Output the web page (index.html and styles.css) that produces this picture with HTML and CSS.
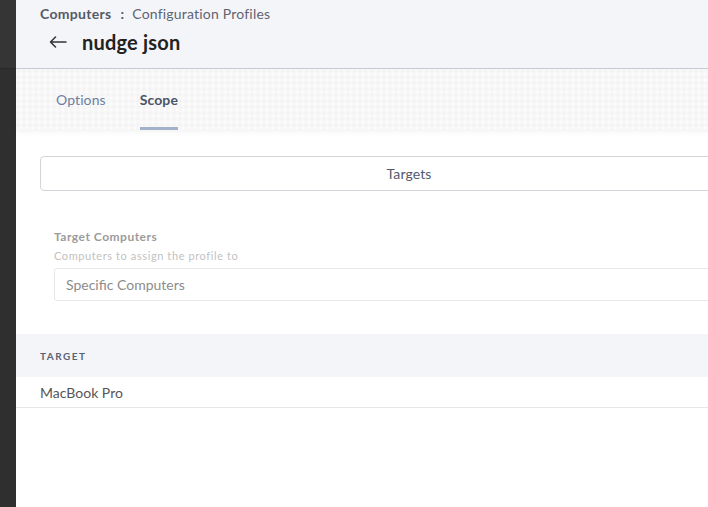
FILE: index.html
```html
<!DOCTYPE html>
<html>
<head>
<meta charset="utf-8">
<link rel="stylesheet" href="styles.css">
</head>
<body>
<div class="app">
  <aside class="sidebar"><div class="sidebar-top"></div></aside>
  <main class="main">
    <header class="header">
      <div class="crumbs"><span class="crumb-strong">Computers</span><span class="crumb-sep">:</span><span class="crumb">Configuration Profiles</span></div>
      <div class="title-row">
        <svg class="back" width="20" height="12" viewBox="0 0 20 12"><path d="M18 6H2.5M7.5 1L2.5 6l5 5" fill="none" stroke="#333" stroke-width="1.5" stroke-linecap="round" stroke-linejoin="round"/></svg>
        <h1 class="title">nudge json</h1>
      </div>
    </header>
    <nav class="tabs">
      <div class="tab">Options</div>
      <div class="tab active">Scope</div>
    </nav>
    <section class="content">
      <div class="seg-button">Targets</div>
      <div class="field">
        <div class="field-label">Target Computers</div>
        <div class="field-hint">Computers to assign the profile to</div>
        <div class="select">Specific Computers</div>
      </div>
    </section>
    <div class="table">
      <div class="thead">TARGET</div>
      <div class="trow">MacBook Pro</div>
    </div>
  </main>
</div>
</body>
</html>
```
FILE: styles.css
```css
html, body {
  margin: 0;
  padding: 0;
  width: 708px;
  height: 507px;
  overflow: hidden;
  background: #ffffff;
  font-family: "Lato", "Liberation Sans", sans-serif;
}
.app {
  display: flex;
  height: 507px;
}
.sidebar {
  width: 16px;
  flex-shrink: 0;
  background: #2f2f2f;
}
.sidebar-top {
  height: 68px;
  background: #353535;
  border-bottom: 1px solid #282828;
}
.main {
  width: 786px;
  flex-shrink: 0;
  display: flex;
  flex-direction: column;
}
.header {
  height: 68px;
  background: #f4f5f9;
  border-bottom: 1px solid #c9ccd3;
  padding: 0 24px;
  box-sizing: content-box;
}
.crumbs {
  display: flex;
  align-items: center;
  height: 26px;
  font-size: 14px;
  color: #5f6470;
  letter-spacing: 0.2px;
}
.crumb-strong {
  font-weight: 700;
  color: #555a66;
  letter-spacing: 0.3px;
}
.crumb-sep {
  margin: 0 8px 0 9px;
  font-weight: 700;
  color: #555a66;
}
.title-row {
  display: flex;
  align-items: center;
  height: 32px;
  padding-left: 8px;
}
.back {
  margin-right: 14px;
}
.title {
  margin: 0;
  font-size: 20px;
  font-weight: 700;
  color: #222222;
  letter-spacing: 0.2px;
}
.tabs {
  height: 61px;
  display: flex;
  align-items: stretch;
  padding-left: 40px;
  gap: 34px;
  background-color: #f7f7f7;
  background-image:
    radial-gradient(circle at 2px 2px, rgba(0,0,0,0.025) 1px, transparent 1.5px),
    radial-gradient(circle at 5px 5px, rgba(255,255,255,0.8) 1px, transparent 1.5px);
  background-size: 6px 6px, 6px 6px;
  box-shadow: 0 2px 5px rgba(0,0,0,0.05);
  position: relative;
  z-index: 1;
}
.tab {
  display: flex;
  align-items: center;
  font-size: 14px;
  color: #6c7fa0;
  padding-top: 3px;
  border-bottom: 3px solid transparent;
  letter-spacing: 0.1px;
}
.tab.active {
  font-weight: 700;
  color: #4b5366;
  border-bottom-color: #a3b2ca;
}
.content {
  padding: 26px 24px 0 24px;
}
.seg-button {
  height: 33px;
  border: 1px solid #d3d5da;
  border-radius: 4px;
  display: flex;
  align-items: center;
  justify-content: center;
  font-size: 14px;
  color: #515a6e;
  letter-spacing: 0.1px;
}
.field {
  padding: 39px 0 0 14px;
}
.field-label {
  font-size: 12px;
  font-weight: 700;
  color: #9b9b9b;
  line-height: 14px;
  letter-spacing: 0.5px;
}
.field-hint {
  font-size: 11px;
  color: #c2c2c2;
  line-height: 14px;
  margin-top: 5px;
  letter-spacing: 0.6px;
}
.select {
  margin-top: 5px;
  height: 31px;
  border: 1px solid #e8e8e8;
  border-radius: 3px;
  display: flex;
  align-items: center;
  padding-left: 11px;
  font-size: 14px;
  color: #8c8c8c;
}
.table {
  margin-top: 33px;
}
.thead {
  height: 43px;
  background: #f4f5f9;
  display: flex;
  align-items: center;
  padding-left: 24px;
  font-size: 10px;
  font-weight: 700;
  letter-spacing: 1.5px;
  color: #5b6274;
}
.trow {
  height: 30px;
  display: flex;
  align-items: center;
  padding-left: 24px;
  font-size: 14px;
  color: #555555;
  border-bottom: 1px solid #e6e6e6;
}
```
